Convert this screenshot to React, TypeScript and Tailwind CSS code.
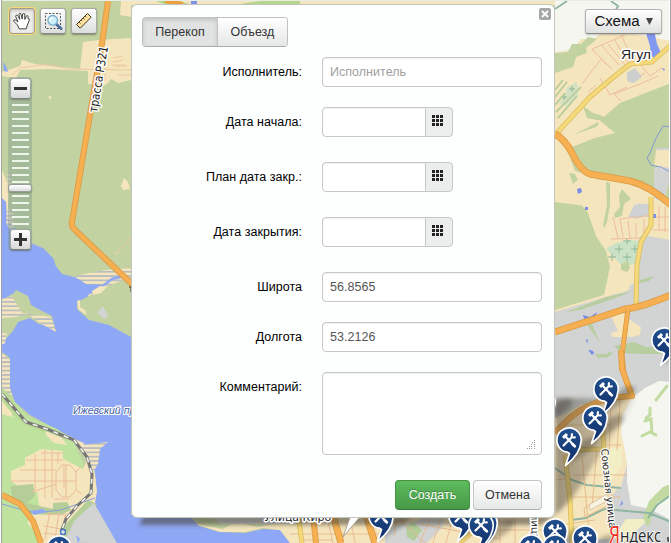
import React from "react";

type Point = { x: number; y: number };

const PINS: Point[] = [
  { x: 664, y: 340 },
  { x: 543, y: 402 },
  { x: 606, y: 389 },
  { x: 595, y: 418 },
  { x: 569, y: 440 },
  { x: 381, y: 516 },
  { x: 461, y: 516 },
  { x: 485, y: 523 },
  { x: 481, y: 525 },
  { x: 555, y: 531 },
  { x: 585, y: 538 },
  { x: 531, y: 547 },
  { x: 555, y: 547 },
  { x: 59, y: 548 },
];

function Pin({ x, y }: Point) {
  return (
    <g transform={`translate(${x} ${y})`}>
      <path
        d="M-1.5 12.2 A12.2 12.2 0 1 1 12.2 1 C11.5 11 5 19 -3.5 25.5 L0.5 13.5Z"
        fill="url(#pin)"
        stroke="#fff"
        strokeWidth="1.7"
        strokeLinejoin="round"
      />
      <g fill="none" stroke="#fff" strokeWidth="2.2" strokeLinecap="round">
        <path d="M-5.5 5.5L3 -3M5 5.5L-3.5 -3.5" />
        <path d="M-6 -2.2L-2 -6" strokeWidth="3" strokeLinecap="butt" />
        <path d="M3 -5.8Q1.8 -2 5.8 -2.6" />
        <path d="M3.6 4.2L5.8 6.2" strokeWidth="2.8" />
      </g>
    </g>
  );
}

function Road({ d, w = 5, kind = "orange" }: { d: string; w?: number; kind?: "orange" | "yellow" }) {
  const edge = kind === "orange" ? "#db9a43" : "#d9bd63";
  const fill = kind === "orange" ? "#f6b052" : "#f6da79";
  return (
    <g fill="none" strokeLinejoin="round">
      <path d={d} stroke={edge} strokeWidth={w} />
      <path d={d} stroke={fill} strokeWidth={w - 1.6} />
    </g>
  );
}

function MapCanvas() {
  return (
    <svg className="block" width="671" height="543" viewBox="0 0 671 543">
      <defs>
        <linearGradient id="pin" x1="0" y1="0" x2="0" y2="1">
          <stop offset="0" stopColor="#21508f" />
          <stop offset="1" stopColor="#102d66" />
        </linearGradient>
        <pattern id="marsh" width="8" height="4.3" patternUnits="userSpaceOnUse">
          <rect width="8" height="4.3" fill="#f5e5bd" />
          <rect width="8" height="1.7" fill="#b7bcc0" />
        </pattern>
        <filter id="soft" x="-20%" y="-20%" width="140%" height="140%">
          <feGaussianBlur stdDeviation="2" />
        </filter>
        <linearGradient id="shade" x1="545" y1="0" x2="636" y2="0" gradientUnits="userSpaceOnUse">
          <stop offset="0" stopColor="#443d35" stopOpacity=".56" />
          <stop offset="1" stopColor="#504a40" stopOpacity=".1" />
        </linearGradient>
      </defs>

      <rect width="671" height="543" fill="#c2d2a1" />

      {/* northern villages */}
      <g fill="#f5e5bd">
        <path d="M83 42L98 40 131 38V80L118 83 111 79 106 85 88 84 88 71 66 70 50 69 20 70 16 78 2 76 2 72 20 66 22 60 35 64 50 66 80 69Z" />
        <path d="M121 1H555V5H131V17L120 15ZM124 178l4 4 2 7-7 1-2-4zM110 256l8-3 2 7-6 2zM49 96h2v3h-2zM2 170l4 9 3 10-1 18 5 13-4 2-7-20z" />
      </g>
      <g fill="none" stroke="#ebc8a0" strokeWidth="1">
        <path d="M12 75L20 68 48 64 67 69 131 70M105 67v14M112 62l12-2M113 58l10-2M115 66h12M112 65h14M118 75h13M100 269l8-8 23-23" />
      </g>
      <path d="M3 62l3 4 2 6-4-1z" fill="#8fa8f5" />
      <path d="M156 1h23l10 3h-25zM260 1h40v3h-60z" fill="#b5d58b" />
      <path d="M191 1h6v3h-6z" fill="#7d92e7" />
      <path d="M165 1l18 3" stroke="#ef9d3b" strokeWidth="4" />

      {/* reservoir */}
      <path
        d="M2 198L6 202 7 218 16 229 28 242 43 248 53 258 56 266 62 274 74 277 85 282 131 275V515L190 516 199 526 220 532 245 533 263 529 280 530 290 543H116L98 510 92 503 96 480 93 460 81 442 52 427 30 415 15 402 10 388 10 358 2 352Z"
        fill="#8fa8f5"
      />
      <path d="M7 208l7 4v22l-8-10zM8 170l3 5v14l-4-4z" fill="url(#marsh)" opacity=".8" />
      <path d="M2 300L14 293 16 290 28 296 31 305 42 311 52 316 56 332 47 326 39 324 30 318 18 322 13 331 2 343Z" fill="#c2d2a1" />
      <path d="M2 299l10-3 10 17 29 4 5 15-16-9-12-9-12 3-14 1zM2 332l5 2-2 9-3 2zM2 353l8 7v28l2 8-10-8z" fill="url(#marsh)" />
      <path d="M56 254H131V277L95 276 74 274 62 273 57 267Z" fill="#c2d2a1" />
      <path d="M74 276l31-6 26-2v22l-28 2-14 5-1-2 18-10-20-1z" fill="url(#marsh)" />
      <path d="M89 296l14-8 28-11v60l-22-12-20-5-12-11v-7z" fill="#c2d2a1" />
      <path d="M77 301l2 9 8 5-2-5-5-3v-7zM92 291l8-5 7 1-6 6-8 2z" fill="#f5e5bd" />
      <path d="M102 306l4 5 2 6-4 2-7-7 3-2z" fill="#d1d4d3" />
      <path d="M104 285l8-6 12-3" fill="none" stroke="#8fa8f5" strokeWidth="2.5" />

      {/* western shore */}
      <path d="M2 388l9 10 16 18 30 13 17 14 9 20 1 24-16 30-9 26H2Z" fill="#bfe39f" />
      <path d="M2 388l9 10 13 21 30 11 13 10-4-1-20-7-20-8-21-22z" fill="#b9d996" />
      <path d="M2 401l10 12 0 4-10-3zM11 471l14-6 0-7 16-9 22 2v8l20 10 7-16 4 16 3 22-3 18-4 8-27 12-3 24H42l-5-20-9-9 0-8 12-5-3-19-13-1-13-10zM45 431l17 7 5 7-13-2-8-8zM76 440l8 3-1 6-6-2z" fill="#f5e5bd" />
      <path d="M81 445l27-3-8 7-2 15-6 10-5-18z" fill="url(#marsh)" />
      <path d="M11 486l22-2 2 12-8 7 26 6 0-6 14-1 4 8-10 5-35-1-14-14zM64 526l24-26 9 4-26 29-9 10z" fill="#b5ce99" />
      <path d="M94 503l-19 17-12 23h54L98 510z" fill="#d1d4d3" />
      <g fill="none" stroke="#e9bd99" strokeWidth="1">
        <path d="M11 481h45M20 470h36M26 460h37M35 454v36M45 450v48M52 450v48M58 452v12M64 466v22M56 472l6-7 8 0 6 7v18l-6 7-8 0-6-7zM56 481h20M66 465v32M41 453h22M32 492l24-8M54 499l15 0M76 472l5-6M76 490l6 4M47 514l18 1M44 526l17 3M44 533l15 2M50 511l-5 28M59 512l-4 27M66 513l-5 20" />
      </g>
      <path d="M2 504l28 8 13 0 18-2 14-5 20-7" fill="none" stroke="#879ed7" />
      <path d="M30 511l13-2 4 3-13 3zM76 535l4 4-2 4M88 535l2 8" fill="#8fa8f5" />
      <Road d="M2 495L20 504 33 521 41 543" w={6} />
      <g fill="none">
        <path d="M2 394L26 422 47 429 74 440 87 457 92 474 91 493 77 506 66 519 61 532" stroke="#777" strokeWidth="3" />
        <path d="M2 394L26 422 47 429 74 440 87 457 92 474 91 493 77 506 66 519 61 532" stroke="#f4f4ee" strokeWidth="1.6" strokeDasharray="5 6" />
      </g>
      <rect x="60" y="529" width="6" height="6" rx="1" fill="#537abd" />
      <path d="M63 530v4M61 532h4" stroke="#fff" />
      <Road d="M108 1L102 43 72 222Q71 226 75 230L136 288" w={6} />

      {/* southern district */}
      <path d="M190 515H560V543H290L280 530 263 528 245 532 220 532 198 525Z" fill="#f5e5bd" />
      <path d="M190 515l95 0-4 8-24 4-22-5-12 7-25-5z" fill="#c2d2a1" />
      <path d="M210 515h90l-3 9H220zM385 528l33-7 8-6h20l-4 13-15 15h-42z" fill="#d1d4d3" />
      <path d="M406 527l7-5 9 8-8 11-7-4z" fill="#b5ce99" />
      <g fill="none" stroke="#e8bb92">
        <path d="M290 534h95M420 524l80 15M430 517l-10 26M441 517l-8 26M453 517l-7 26M500 517v26M515 517v26M490 530h70M400 520l25 23M327 517l6 26M350 517l5 26M397 517l-3 20M303 540l30 0" />
      </g>
      <Road d="M298 515l4 28" w={5} kind="yellow" />
      <Road d="M313 515l3 28" w={6} />
      <Road d="M333 515l8 28M366 515l9 28" w={7} />
      <Road d="M460 543l17-14" w={4} kind="yellow" />

      {/* eastern districts */}
      <rect x="555" width="116" height="543" fill="#f5e5bd" />
      <path d="M555 1h116v40l-20-4-36-6-15 3-6 5-13 0-6 8-10 4-11 1z" fill="#f4f6ef" />
      <path d="M555 53l13-1 4-8 9 0 7-7 9 2-11 9 1 5-11 4-3 10-18 6zM564 140l34-18 22-19 51-20v122l-20-12-46-10-30-12-16-30z" fill="#c2d2a1" />
      <path d="M555 134l9 4 32-11 3-3-8-11 24 20-20 5-28 11 8 22 25 7-10 6-20-5-12-20-5-8z" fill="#f5e5bd" />
      <path d="M583 106l10 7 10 3 1 4-7 0-10-2zM555 202l25 1 8 10 8 23 10 15 4 16-6 28-20 6-29 9z" fill="#c2d2a1" />
      <path d="M555 312l74-22 10-52 8-10 24-1V543H555z" fill="#d1d4d3" />
      <path d="M604 296l9-31 6 0 17-2-2 20-7 4-2 5z" fill="#f5e5bd" />
      <path d="M555 187L580 178 620 181 652 190 671 210V240L642 235 630 250 605 248 596 235 586 206 555 202Z" fill="#f5e5bd" />
      <path d="M634 205l6-2 7 4 0 9-11 3-7-2zM654 168l14-4 3 8-7 31-10-5z" fill="#d1d4d3" />
      <path d="M628 217l5-9 8-4h10v13zM656 148h15v20l-15-2z" fill="#cfd2d2" />
      <path d="M656 150h15v18l-17-2z" fill="#f5e5bd" />
      <path d="M606 249l10-6 13-3 10 1 1 15-7 9-13-1-8-9z" fill="#cce2c7" />
      <g fill="none" stroke="#8eb798"><path d="M619 245v8m-4-4h8M635 245v8m-4-4h8M627 253v8m-4-4h8M612 253v8m-4-4h8M627 239v5m-4-3h8" /></g>
      <path d="M566 93l0-5 10-6 2 3 0 11-12 10-7-2z" fill="#d4e2c1" />
      <path d="M572 86v6m-3-3h6M564 94v6m-3-3h6" stroke="#90b397" />
      <path d="M555 90l8-10M555 97l12-15M555 105l10-12M556 112l25-25M558 118l19-22" stroke="#b4cb99" strokeWidth="1.7" />
      <path d="M606 182l4 1 0 22-3 17-3 6-1-3 4-20zM622 189l9 10-7 5-2 12-7 2-1-4 6-7-1-11zM569 173l6 1 3 6-5 4zM621 264l7-3 2 7-3 4-6-2z" fill="#c2d2a1" />
      <g fill="none" stroke="#edbd9e">
        <path d="M592 49l15 16M601 45l18 20M608 44l18 22M614 39l14 23M621 35l13 27M592 49l33-14M582 84l19-25M601 59l11 10M588 92l8-7M600 78l10 17 17-8M609 84l11-11M630 82l15-9M621 101l-7-7M614 94l26-10 18-8M640 64l10 12 12-8" />
        <path d="M611 239l30-1M613 217l5 21M620 219l3 18M628 221l2 17M636 223l0 15M644 219v14M651 202v28M659 206v25M665 206v26M653 217h18M653 230h18M620 219l33-4" />
      </g>
      <path d="M627 73l8-5 7 9-8 6-7-2z" fill="#cccfcd" />
      <path d="M646 33l8-3 3 14 5 11-5 4-6-3-1-10z" fill="#8298f1" />
      <path d="M577 189l4-1 1 4-4 2zM585 207h3v3h-3zM583 315l7 2 7-5-2 5 6 2-8 1-8 2zM588 350l8 1-4 4zM586 339l2 1-1 4M662 68l3 1-1 2M660 193l4 1-2 3M652 214h4v4h-4" fill="#788ee8" />
      <path d="M671 127l-8-1-7 12-6 15-3 5 4 7 10 2 9 5" fill="none" stroke="#809bd5" />
      <path d="M611 1l7 5-2 4 9 6M555 9l12-8" fill="none" stroke="#91b6a5" strokeWidth="2" />
      <path d="M566 312l40-15 27-6-20 8-33 11zM585 322l17-4-10 6 6 14 4 6-7-8zM594 353l6-3 13 3-5 4-10 1zM614 346l20-4 12 5 22 0v7l-29 0-17-1zM640 280l14-4-5 5-10 2z" fill="#b8cea0" />
      <path d="M610 314l11-1 6 1 0 4 14 9-1 8-8 2-10 0-10 0-1-4 7-2z" fill="#f5e5bd" />
      <Road d="M555 135L590 97 610 80 630 64 652 62 671 45" w={5} kind="yellow" />
      <Road d="M555 134Q565 139 573 155T590 174L630 181Q650 186 671 205" w={7} />
      <Road d="M651 197L651 225 641 242 637 265 636 305" w={5} kind="yellow" />
      <Road d="M555 332L625 309Q640 308 671 295" w={7} />
      <Road d="M628 309L622 355 624 374 632 395" w={5} />
      <path d="M600 400l24-6 9 3-2 13-7 20 6 15 0 8-15 55 14 31H555V418l10-4 15-9z" fill="#f5e5bd" />
      <path d="M592 350h16v4h-13zM607 503l10-14 20 2 7 15 27 17v22h-52z" fill="#d1d4d3" />
      <path d="M671 382V520L650 509 631 505 627 482 627 463 624 446 621 432 622 416 631 399 645 388 659 381Z" fill="#f4f6ef" />
      <path d="M607 448l15 0v16l-14 22-3-30zM626 519l-12 18 9 6 26-24z" fill="#f2eec6" />
      <g fill="none" stroke="#c2dba0" strokeWidth="3" strokeLinecap="round">
        <path d="M667 386L656 400M646 418l4-3v-7M645 421l6-2 1 14M642 436l8-4 6 3" />
      </g>
      <path d="M663 487l-14 14-6 17 5 10 9-25 14-7v-12z" fill="#c2d99f" />
      <path d="M555 468l17 12 15 5 34 3M571 520l15-2 18-9 45 4 22 9M648 518l9-13 14-10" fill="none" stroke="#8eb5a1" strokeWidth="2" />
      <path d="M622 500l1 4-3 2z" fill="#8197e8" />
      <g fill="none" stroke="#e6bd8d">
        <path d="M565 425l45 0M611 400l-2 55M574 475h53M571 497h50M582 456l8 87M597 448l-5 60M555 480l15-2M560 525l35-5M607 445l14 0M620 400l-3 50M584 508l27-15 2 10-28 14z" />
      </g>
      <path d="M589 505l18-11 2 6-19 10z" fill="#f7f3e0" stroke="#d9c4a4" />
      <Road d="M555 433Q570 415 588 406T632 396L622 369 621 350" w={6} />
      <Road d="M565 455L570 500 572 543M565 450L604 449 602 425" w={5} kind="yellow" />

      {/* shadows cast over the ground */}
      <path d="M144 515H555V398H636L590 470Q570 508 541 525H139Z" fill="url(#shade)" filter="url(#soft)" />
      <g fill="#25221d" opacity=".3" filter="url(#soft)">
        {PINS.map((p, i) => (
          <path key={i} d={`M${p.x - 3} ${p.y + 26}L${p.x + 10} ${p.y + 5} Q${p.x + 20} ${p.y - 6} ${p.x + 29} ${p.y - 2} Q${p.x + 30} ${p.y + 6} ${p.x + 15} ${p.y + 14}Z`} />
        ))}
      </g>

      {/* place names */}
      <g paintOrder="stroke" stroke="#fff" strokeWidth="3" strokeLinejoin="round" fill="#222">
        <text transform="translate(97 113) rotate(-80.5)" fontFamily="'DejaVu Sans', sans-serif" fontSize="12" textLength="67" lengthAdjust="spacingAndGlyphs">трасса Р321</text>
        <text x="621" y="59" fontFamily="'Liberation Sans', sans-serif" fontSize="13" textLength="30" lengthAdjust="spacingAndGlyphs">Ягул</text>
        <text x="73" y="414" fontFamily="'Liberation Sans', sans-serif" fontSize="10.5" fontStyle="italic" fill="#3f5ea6" strokeWidth="2">Ижевский пруд</text>
        <text transform="translate(601 449) rotate(84)" fontFamily="'DejaVu Sans', sans-serif" fontSize="10" strokeWidth="2" textLength="80" lengthAdjust="spacingAndGlyphs">Союзная улица</text>
        <text x="264" y="521" fontFamily="'DejaVu Sans', sans-serif" fontSize="11">Улица Киро</text>
        <text transform="translate(531 514) rotate(88)" fontFamily="'DejaVu Sans', sans-serif" fontSize="10">лица</text>
        <path d="M129 287h5M131 287v5" stroke="#333" strokeWidth="1" />
      </g>
      <path d="M352 512L343 537 364 512" fill="#fff" stroke="#99958c" strokeWidth=".8" />
      {PINS.map((p, i) => <Pin key={i} {...p} />)}
      <g fontFamily="'Open Sans', 'Noto Sans', sans-serif" stroke="#fff" strokeWidth="1.5" paintOrder="stroke">
        <text x="609" y="543" fontSize="23" fill="#f02b20" textLength="11" lengthAdjust="spacingAndGlyphs">Я</text>
        <text x="620" y="541.5" fontSize="18.5" fill="#272727" textLength="41" lengthAdjust="spacingAndGlyphs">ндекс</text>
      </g>
      <path d="M668 537v3q0 2 3 1" fill="none" stroke="#333" strokeWidth="1.5" />
      <path d="M0 .5H671" stroke="#e9ebe5" />
      <path d="M.5 0V543" stroke="#fff" /><path d="M1.5 0V543" stroke="#a2a2a2" />
      <path d="M669.5 0V543" stroke="#fff" /><path d="M670.5 0V543" stroke="#a5a5a5" />
    </svg>
  );
}

const toolClass =
  "flex size-[26px] items-center justify-center rounded-[3px] border border-[#a9aca6] border-b-[#858983] bg-linear-to-b from-white to-[#dcdddd] shadow-[0_1px_2px_#0005]";

function MapTools() {
  return (
    <div className="absolute left-[9px] top-2 flex gap-[5px]">
      <button className="flex size-[26px] items-center justify-center rounded-[3px] border border-[#a69c86] bg-[#eeedea] shadow-[0_0_0_1px_#f6d779,inset_0_1px_3px_#0004]">
        <svg className="shrink-0" width="20" height="20" viewBox="0 0 20 20" fill="#fff" stroke="#444" strokeWidth="1" strokeLinejoin="round" strokeLinecap="round">
          <path d="M7 17.5L5.5 14 2 10.5Q1 8.5 3 8.7L6 11 3.7 5.5Q3.6 4 4.9 4 6 4.5 7.8 8.5L7 3.3Q7.3 1.8 8.8 2.6L10.2 8 10.6 3Q11.8 1.8 12.8 3L12.8 8.5 14.3 5Q16 4 16.2 5.5L15.8 7.5Q17.6 7.5 17.4 9L15.8 13 14.3 17.5Z" />
        </svg>
      </button>
      <button className={toolClass}>
        <svg className="shrink-0" width="20" height="20" viewBox="0 0 20 20" fill="none">
          <rect x="2.5" y="2.5" width="15" height="15" stroke="#555" strokeDasharray="2 1.5" />
          <path d="M12.5 12.5L18 17.5" stroke="#4b7199" strokeWidth="3" strokeLinecap="round" />
          <circle cx="9.7" cy="9.3" r="4.8" fill="#cbeefa" stroke="#74a9c8" strokeWidth="1.3" />
          <path d="M6.8 10Q7 7 10 6.5" stroke="#fff" strokeWidth="1.7" />
        </svg>
      </button>
      <button className={toolClass}>
        <svg className="shrink-0" width="20" height="20" viewBox="0 0 20 20">
          <path d="M2.5 13.5L13.5 2.5 17.2 6.2 6.2 17.2Z" fill="#ffe2a0" stroke="#40351f" />
          <path d="M5 11l1.6 1.6M7 9l1.2 1.2M9 7l1.6 1.6M11 5l1.2 1.2" stroke="#6e552b" />
        </svg>
      </button>
    </div>
  );
}

function ZoomSlider() {
  const button =
    "flex size-[21px] items-center justify-center rounded-[3px] border border-[#a2a6a4] border-b-[#7d817f] bg-linear-to-b from-white to-[#d7d8d8] shadow-[0_1px_2px_#0004]";
  return (
    <div className="absolute left-2 top-[77px] flex h-[174px] w-6 flex-col items-center justify-between rounded-sm bg-[#829d91]/45 py-[1px]">
      <button className={button}>
        <svg width="13" height="13"><path d="M0 6.5h13" stroke="#333" strokeWidth="3" /></svg>
      </button>
      <div className="relative flex w-[17px] flex-col gap-[5px]">
        {Array.from({ length: 18 }, (_, i) => <i key={i} className="h-[2px] bg-[#eef6ea]" />)}
        <i className="absolute -left-[4px] top-[80px] h-2 w-6 rounded-[3px] border border-[#969d99] bg-linear-to-b from-white to-[#ddd] shadow-[0_1px_2px_#0004]" />
      </div>
      <button className={button}>
        <svg width="13" height="13"><path d="M0 6.5h13M6.5 0v13" stroke="#333" strokeWidth="3" /></svg>
      </button>
    </div>
  );
}

const fieldClass =
  "h-[30px] rounded-[4px] border border-[#c5c8c8] bg-white px-[7px] text-[#555] shadow-[inset_0_1px_1px_rgba(0,0,0,.06)] outline-none placeholder:text-[#a0a0a0]";

function Row({ label, children, className = "" }: { label: string; children: React.ReactNode; className?: string }) {
  return (
    <div className={"flex items-start " + className}>
      <label className="w-[160px] shrink-0 pt-[5px] text-right leading-5 text-black">{label}</label>
      <div className="ml-5 flex">{children}</div>
    </div>
  );
}

function DateField({ label }: { label: string }) {
  return (
    <Row label={label} className="mb-[25px]">
      <input className={fieldClass + " w-[104px] rounded-r-none"} />
      <button className="-ml-px flex h-[30px] w-7 items-start justify-center rounded-r-[4px] border border-[#c5c8c8] bg-[#eceeed] pr-[3px] pt-[7px]">
        <svg width="11" height="11" fill="#222">
          {[0, 4, 8].flatMap((y) => [0, 4, 8].map((x) => <rect key={`${x}-${y}`} x={x} y={y} width="3" height="3" />))}
        </svg>
      </button>
    </Row>
  );
}

function WorkForm() {
  return (
    <section className="absolute left-[131px] top-1 h-[514px] w-[424px] rounded-[6px] border border-[#c2c5bd] bg-[#fdfefe] px-[10px] pt-3 text-[12.5px] tracking-[0.03px]">
      <button className="absolute right-[3px] top-[3px] flex size-3 items-center justify-center rounded-[2px] bg-[#a5a7a6]">
        <svg width="8" height="8" viewBox="0 0 8 8"><path d="M1 1l6 6M7 1l-6 6" stroke="white" strokeWidth="1.8" /></svg>
      </button>
      <div className="flex h-[30px] w-[146px] overflow-hidden rounded-[4px] border border-[#bfc2c0] border-b-[#a9acaa] text-[#333]">
        <button className="w-[75px] border-r border-[#c1c4c2] bg-[#e1e3e2] shadow-[inset_0_2px_4px_rgba(0,0,0,.15)]">Перекоп</button>
        <button className="flex-1 bg-linear-to-b from-white to-[#e6e7e7]">Объезд</button>
      </div>
      <form className="mt-[10px]">
        <Row label="Исполнитель:" className="mb-5"><input className={fieldClass + " w-[220px]"} placeholder="Исполнитель" /></Row>
        <DateField label="Дата начала:" />
        <DateField label="План дата закр.:" />
        <DateField label="Дата закрытия:" />
        <Row label="Широта" className="mb-5"><input className={fieldClass + " w-[220px]"} defaultValue="56.8565" /></Row>
        <Row label="Долгота" className="mb-5"><input className={fieldClass + " w-[220px]"} defaultValue="53.2126" /></Row>
        <Row label="Комментарий:">
          <div className="relative h-[83px] w-[220px]">
            <textarea className="block size-full resize-none rounded-[4px] border border-[#c5c8c8] bg-white shadow-[inset_0_1px_1px_rgba(0,0,0,.06)] outline-none" />
            <svg className="absolute bottom-1 right-1.5" width="11" height="11" fill="#999">
              {[[9, 0], [7, 2], [9, 2], [6, 4], [9, 4], [4, 6], [6, 6], [9, 6], [2, 8], [4, 8], [6, 8], [9, 8]].map(([x, y]) => <rect key={`${x}-${y}`} x={x} y={y} width="1" height="1" />)}
            </svg>
          </div>
        </Row>
        <div className="mr-[2px] mt-[25px] flex justify-end gap-[3px]">
          <button type="button" className="h-[30px] w-[75px] rounded-[4px] border border-[#459346] border-b-[#38783a] bg-linear-to-b from-[#5dbb5d] to-[#489947] text-white [text-shadow:0_-1px_0_#0004]">Создать</button>
          <button type="button" className="h-[30px] w-[69px] rounded-[4px] border border-[#c4c6c5] border-b-[#aeb0af] bg-linear-to-b from-white to-[#e6e7e7] text-[#333]">Отмена</button>
        </div>
      </form>
    </section>
  );
}

export default function App() {
  return (
    <main className="relative h-[543px] w-[671px] overflow-hidden bg-[#c2d2a1] font-['Liberation_Sans',sans-serif]">
      <MapCanvas />
      <MapTools />
      <ZoomSlider />
      <button className="absolute left-[585px] top-[9px] flex h-[25px] w-[77px] items-center justify-center gap-1.5 rounded-[3px] border border-[#b1b4b1] border-b-[#858885] bg-linear-to-b from-white to-[#dfe0e0] text-[15px] text-[#111] shadow-[0_1px_2px_#0003]">
        Схема
        <svg width="7" height="7"><path d="M0 0h7L3.5 7z" fill="#444" /></svg>
      </button>
      <WorkForm />
    </main>
  );
}
